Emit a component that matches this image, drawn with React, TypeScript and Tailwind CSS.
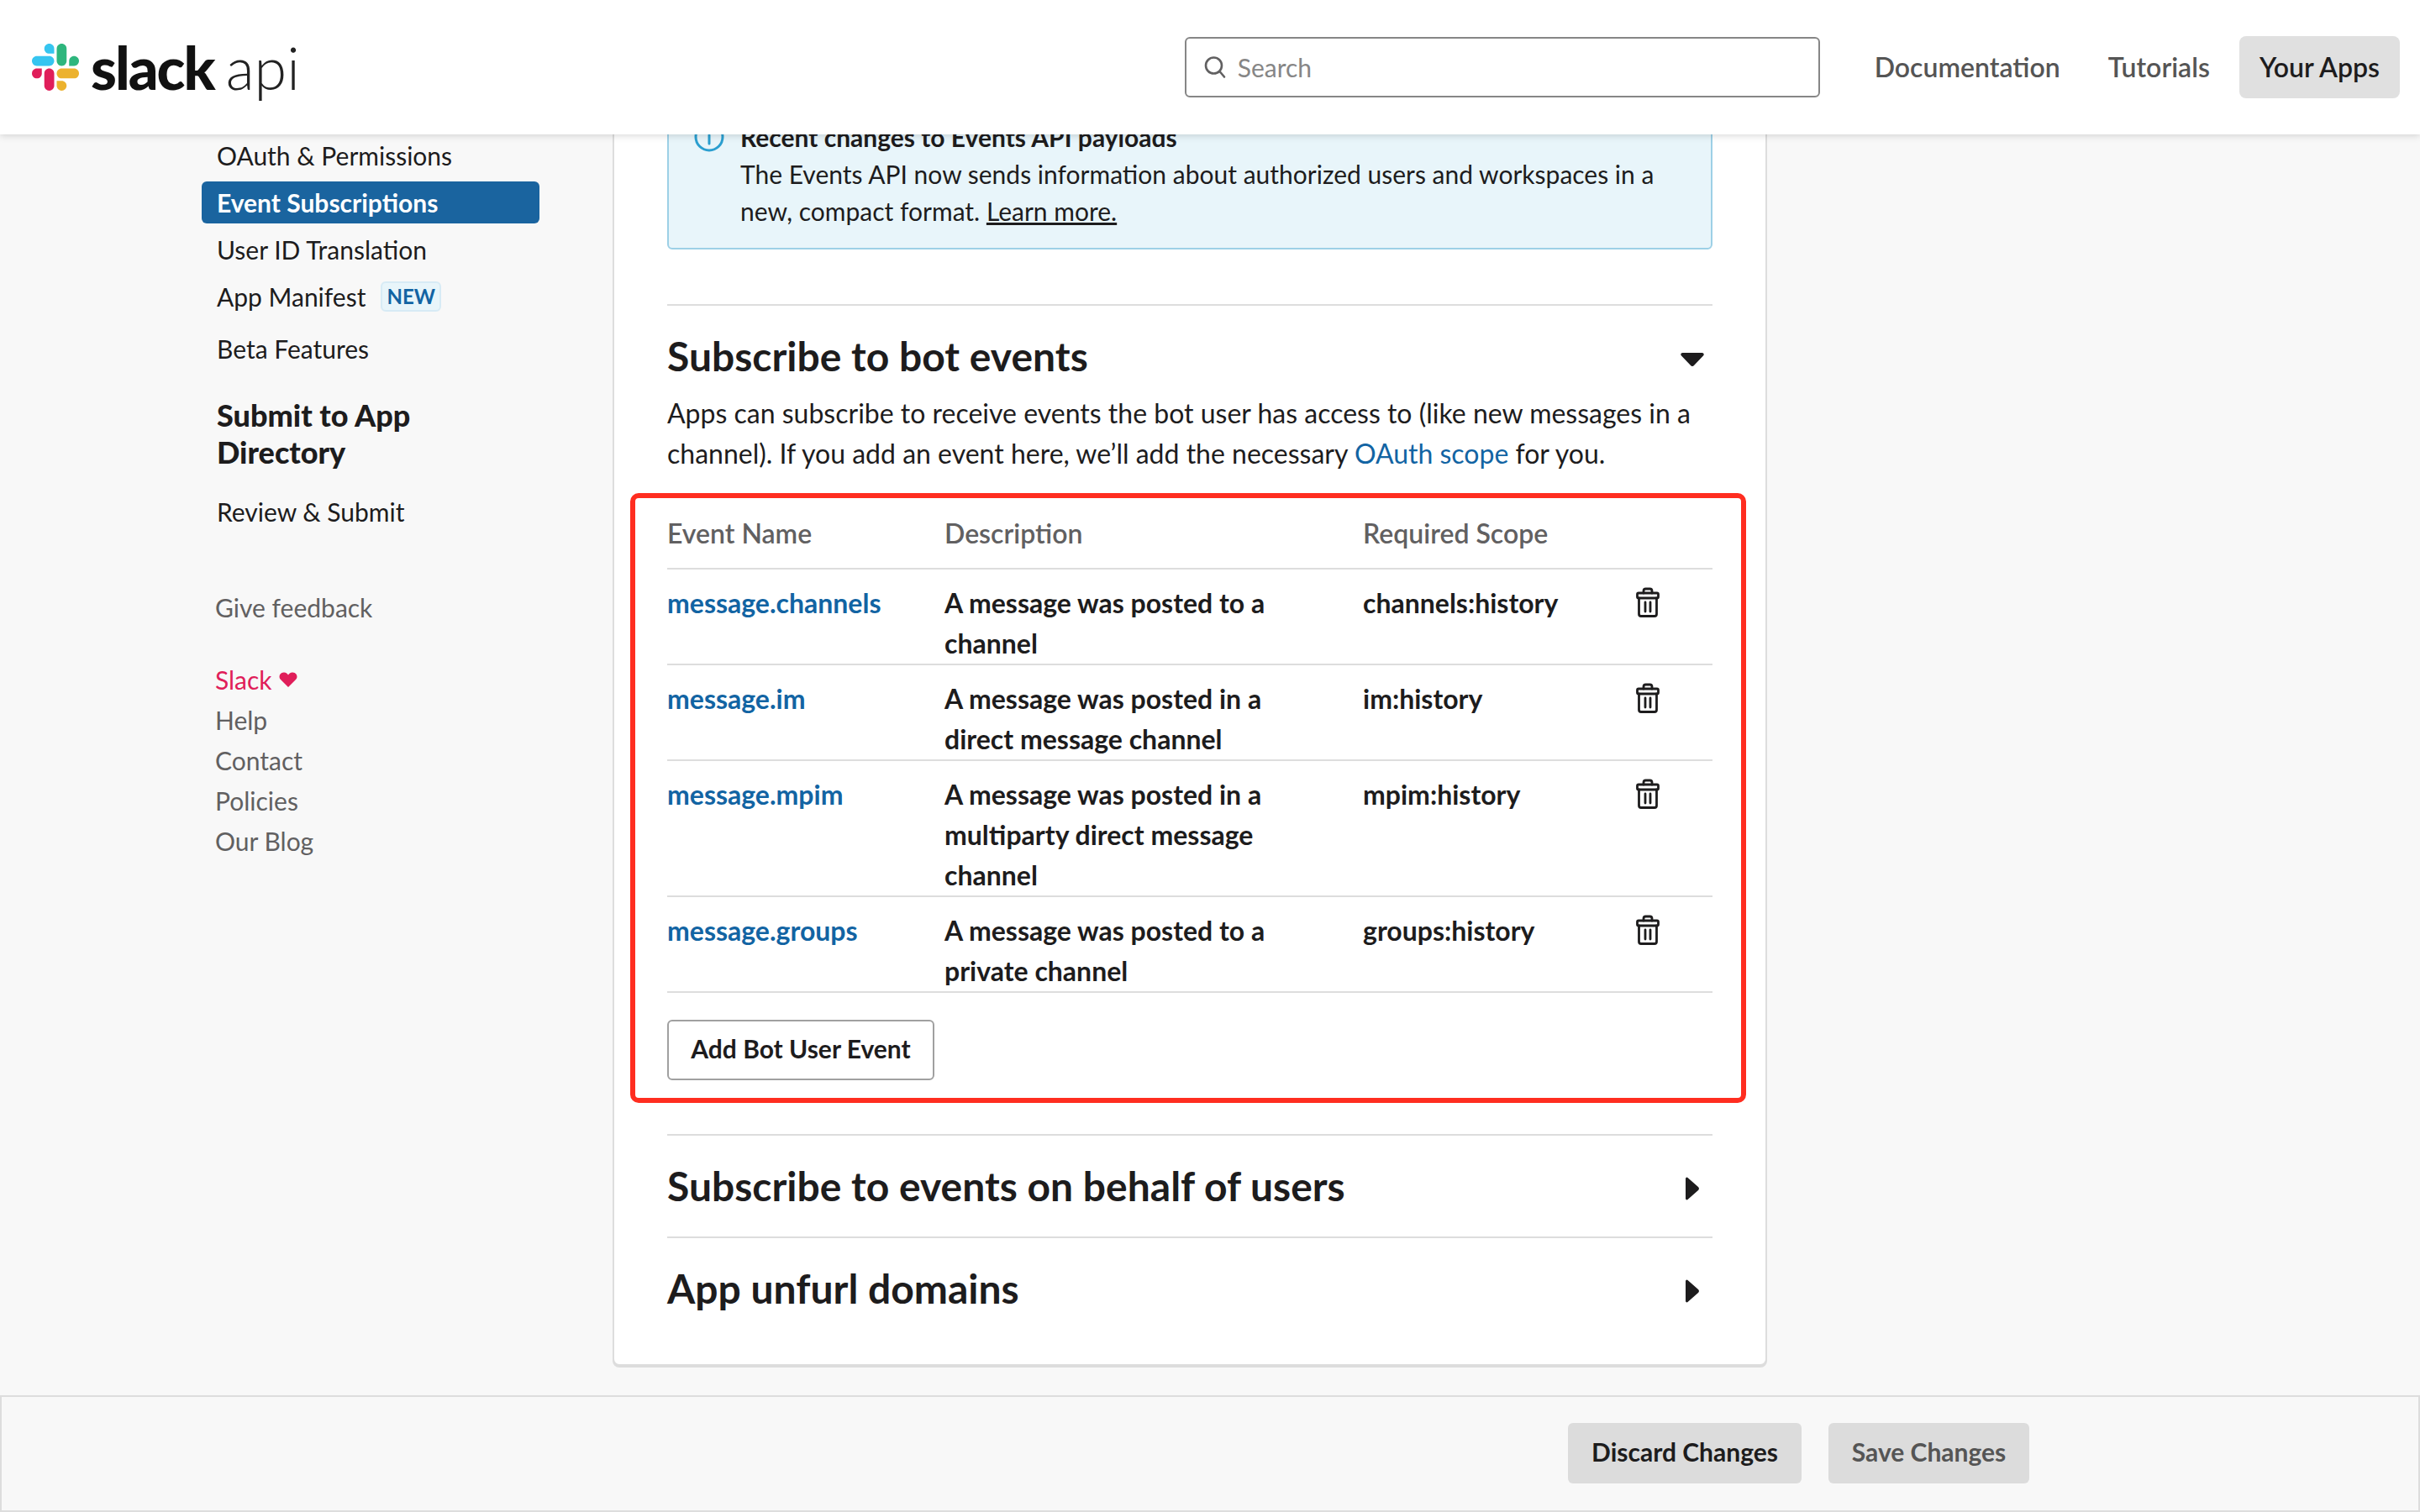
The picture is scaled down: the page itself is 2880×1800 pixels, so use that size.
const EVENTS = [
  { name: "message.channels", lines: ["A message was posted to a", "channel"], scope: "channels:history" },
  { name: "message.im", lines: ["A message was posted in a", "direct message channel"], scope: "im:history" },
  { name: "message.mpim", lines: ["A message was posted in a", "multiparty direct message", "channel"], scope: "mpim:history" },
  { name: "message.groups", lines: ["A message was posted to a", "private channel"], scope: "groups:history" },
];

function SlackMark() {
  return (
    <svg viewBox="0 0 122.8 122.8" className="h-[56px] w-[56px]">
      <path fill="#E01E5A" d="M25.8 77.6c0 7.1-5.8 12.9-12.9 12.9S0 84.7 0 77.6s5.8-12.9 12.9-12.9h12.9v12.9z" />
      <path fill="#E01E5A" d="M32.3 77.6c0-7.1 5.8-12.9 12.9-12.9s12.9 5.8 12.9 12.9v32.3c0 7.1-5.8 12.9-12.9 12.9s-12.9-5.8-12.9-12.9V77.6z" />
      <path fill="#36C5F0" d="M45.2 25.8c-7.1 0-12.9-5.8-12.9-12.9S38.1 0 45.2 0s12.9 5.8 12.9 12.9v12.9H45.2z" />
      <path fill="#36C5F0" d="M45.2 32.3c7.1 0 12.9 5.8 12.9 12.9s-5.8 12.9-12.9 12.9H12.9C5.8 58.1 0 52.3 0 45.2s5.8-12.9 12.9-12.9h32.3z" />
      <path fill="#2EB67D" d="M97 45.2c0-7.1 5.8-12.9 12.9-12.9s12.9 5.8 12.9 12.9-5.8 12.9-12.9 12.9H97V45.2z" />
      <path fill="#2EB67D" d="M90.5 45.2c0 7.1-5.8 12.9-12.9 12.9s-12.9-5.8-12.9-12.9V12.9C64.7 5.8 70.5 0 77.6 0s12.9 5.8 12.9 12.9v32.3z" />
      <path fill="#ECB22E" d="M77.6 97c7.1 0 12.9 5.8 12.9 12.9s-5.8 12.9-12.9 12.9-12.9-5.8-12.9-12.9V97h12.9z" />
      <path fill="#ECB22E" d="M77.6 90.5c-7.1 0-12.9-5.8-12.9-12.9s5.8-12.9 12.9-12.9h32.3c7.1 0 12.9 5.8 12.9 12.9s-5.8 12.9-12.9 12.9H77.6z" />
    </svg>
  );
}

function Trash() {
  return (
    <svg viewBox="0 0 28 36" className="h-[36px] w-[28px]" fill="none" stroke="#1d1c1d" strokeWidth="2.8" strokeLinecap="round" strokeLinejoin="round">
      <path d="M9 7V4.500A2.500 2.500 0 0 1 11.500 2h5A2.500 2.500 0 0 1 19 4.500V7" />
      <rect x="1.500" y="7" width="25" height="6" rx="1.500" />
      <path d="M3.500 13v19a2.500 2.500 0 0 0 2.500 2.500h16a2.500 2.500 0 0 0 2.500-2.500V13" />
      <path d="M11 18v11M17 18v11" />
    </svg>
  );
}

function SectionRow({ title }: { title: string }) {
  return (
    <div className="flex h-[122px] items-center justify-between border-t-2 border-[#dddddd]">
      <h2 className="text-[48px] font-bold text-[#1d1c1d]">{title}</h2>
      <svg viewBox="0 0 16 28" className="mr-[16px] mt-[5px] h-[28px] w-[16px]">
        <path d="M2.500 1 15 12a2.600 2.600 0 0 1 0 4L2.500 27A1.500 1.500 0 0 1 0 26V2a1.500 1.500 0 0 1 2.500-1z" fill="#1d1c1d" />
      </svg>
    </div>
  );
}

export default function App() {
  return (
    <div className="flex h-[1800px] flex-col overflow-hidden bg-[#f8f8f8] font-['Lato',sans-serif] text-[#1d1c1d]">
      <header className="relative z-10 flex h-[160px] shrink-0 items-center bg-white pl-[38px] pr-[24px] shadow-[0_2px_8px_rgba(0,0,0,0.15)]">
        <SlackMark />
        <div className="ml-[14px] flex items-baseline text-[70px] leading-none">
          <span className="font-black tracking-[-2px] text-[#111111]">slack</span>
          <span className="ml-[14px] font-light text-[#222222]">api</span>
        </div>
        <div className="ml-auto flex h-[72px] w-[756px] items-center gap-[13px] rounded-[6px] border-2 border-[#868686] pl-[20px]">
          <svg viewBox="0 0 28 28" className="h-[28px] w-[28px]" fill="none" stroke="#616061" strokeWidth="2.6" strokeLinecap="round">
            <circle cx="12.500" cy="12" r="9.500" />
            <path d="m19.500 19 5.500 6.500" />
          </svg>
          <span className="text-[30px] text-[#868686]">Search</span>
        </div>
        <nav className="ml-[41px] flex items-center text-[32px] font-semibold text-[#555555]">
          <a className="px-[24px]">Documentation</a>
          <a className="ml-[9px] mr-[11px] px-[24px]">Tutorials</a>
          <a className="flex h-[74px] items-center rounded-[8px] bg-[#e0e0e0] px-[24px] text-[#1d1c1d]">Your Apps</a>
        </nav>
      </header>

      <main className="flex min-h-0 flex-1 overflow-hidden">
        <aside className="w-[729px] shrink-0 pl-[240px] text-[30px]">
          <ul className="w-[402px]">
            <li className="flex h-[50px] items-center pl-[18px]">OAuth & Permissions</li>
            <li className="mt-[6px] flex h-[50px] items-center rounded-[6px] bg-[#1a649f] pl-[18px] font-bold text-white">Event Subscriptions</li>
            <li className="mt-[6px] flex h-[50px] items-center pl-[18px]">User ID Translation</li>
            <li className="mt-[6px] flex h-[50px] items-center gap-[18px] pl-[18px]">
              App Manifest
              <span className="rounded-[6px] border-2 border-[#d7ebf5] bg-[#e8f5fa] px-[5px] text-[24px] font-bold leading-[32px] text-[#1264a3]">NEW</span>
            </li>
            <li className="mt-[12px] flex h-[50px] items-center pl-[18px]">Beta Features</li>
          </ul>
          <h3 className="mt-[32px] pl-[18px] text-[36px] font-black leading-[44px]">
            Submit to App
            <br />
            Directory
          </h3>
          <p className="mt-[24px] pl-[18px] leading-[50px]">Review & Submit</p>
          <p className="mt-[64px] pl-[16px] leading-[50px] text-[#616061]">Give feedback</p>
          <ul className="mt-[37px] pl-[16px] leading-[48px] text-[#616061]">
            <li className="flex items-center gap-[8px] text-[#e01e5a]">
              Slack
              <svg viewBox="0 0 24 20" className="h-[18px] w-[22px]" fill="#e01e5a">
                <path d="M12 20 2 10C-1 7 0 1 6 .5 9 .3 11 2 12 4c1-2 3-3.700 6-3.500C24 1 25 7 22 10z" />
              </svg>
            </li>
            <li>Help</li>
            <li>Contact</li>
            <li>Policies</li>
            <li>Our Blog</li>
          </ul>
        </aside>

        <section className="-mt-[60px] mb-[35px] w-[1374px] shrink-0 rounded-[8px] border-2 border-[#dddddd] bg-white px-[63px] shadow-[0_2px_0_#dddddd]">
          <div className="mt-[17px] flex h-[178px] gap-[19px] rounded-[6px] border-2 border-[#9dd0e6] bg-[#e8f5fa] pl-[30px] pt-[20px] text-[30px] leading-[44px]">
            <svg viewBox="0 0 36 36" className="mt-[4px] h-[36px] w-[36px] shrink-0" fill="none" stroke="#2b9fd0" strokeWidth="3" strokeLinecap="round">
              <circle cx="18" cy="18" r="16" />
              <path d="M18 16v10M18 10v.5" />
            </svg>
            <div>
              <p className="font-bold">Recent changes to Events API payloads</p>
              <p>The Events API now sends information about authorized users and workspaces in a</p>
              <p>
                new, compact format. <a className="underline">Learn more.</a>
              </p>
            </div>
          </div>

          <div className="mt-[65px] border-t-2 border-[#dddddd] pt-[36px]">
            <div className="flex items-center justify-between">
              <h2 className="-mt-[2px] mb-[2px] text-[48px] font-bold leading-[52px]">Subscribe to bot events</h2>
              <svg viewBox="0 0 28 16" className="mr-[10px] mt-[4px] h-[16px] w-[28px]">
                <path d="M1 3.500 12 15a2.800 2.800 0 0 0 4 0L27 3.500C28.500 2 27.500 0 25.500 0h-23C.5 0-.5 2 1 3.500z" fill="#1d1c1d" />
              </svg>
            </div>
            <p className="mt-[16px] text-[32px] leading-[48px]">
              Apps can subscribe to receive events the bot user has access to (like new messages in a
              <br />
              channel). If you add an event here, we’ll add the necessary <a className="text-[#1264a3]">OAuth scope</a> for you.
            </p>
          </div>

          <div className="-ml-[44px] -mr-[40px] mt-[23px] h-[726px] rounded-[10px] border-[6px] border-[#ff2d20] pl-[38px] pr-[34px]">
            <div className="grid h-[85px] grid-cols-[330px_498px_1fr] items-center border-b-2 border-[#dddddd] text-[32px] font-semibold text-[#616061]">
              <span>Event Name</span>
              <span>Description</span>
              <span>Required Scope</span>
            </div>
            {EVENTS.map((ev) => (
              <div key={ev.name} className="grid grid-cols-[330px_498px_325px_1fr] border-b-2 border-[#dddddd] pt-[16px] text-[32px] font-bold leading-[48px]">
                <a className="text-[#1264a3]">{ev.name}</a>
                <div>
                  {ev.lines.map((line) => (
                    <p key={line}>{line}</p>
                  ))}
                </div>
                <span>{ev.scope}</span>
                <div className="pt-[5px]">
                  <Trash />
                </div>
              </div>
            ))}
            <button className="mt-[32px] h-[72px] w-[318px] rounded-[6px] border-2 border-[#a0a0a0] pb-[3px] text-[30px] font-bold">Add Bot User Event</button>
          </div>

          <div className="mt-[37px]">
            <SectionRow title="Subscribe to events on behalf of users" />
            <SectionRow title="App unfurl domains" />
          </div>
        </section>
      </main>

      <footer className="flex h-[139px] shrink-0 justify-end gap-[32px] border-2 border-[#dddddd] bg-[#f8f8f8] pr-[463px] pt-[31px] text-[30px] font-bold">
        <button className="h-[72px] w-[278px] rounded-[6px] bg-[#dcdcdc] pb-[3px]">Discard Changes</button>
        <button className="h-[72px] w-[239px] rounded-[6px] bg-[#dcdcdc] pb-[3px] text-[#555555]">Save Changes</button>
      </footer>
    </div>
  );
}
